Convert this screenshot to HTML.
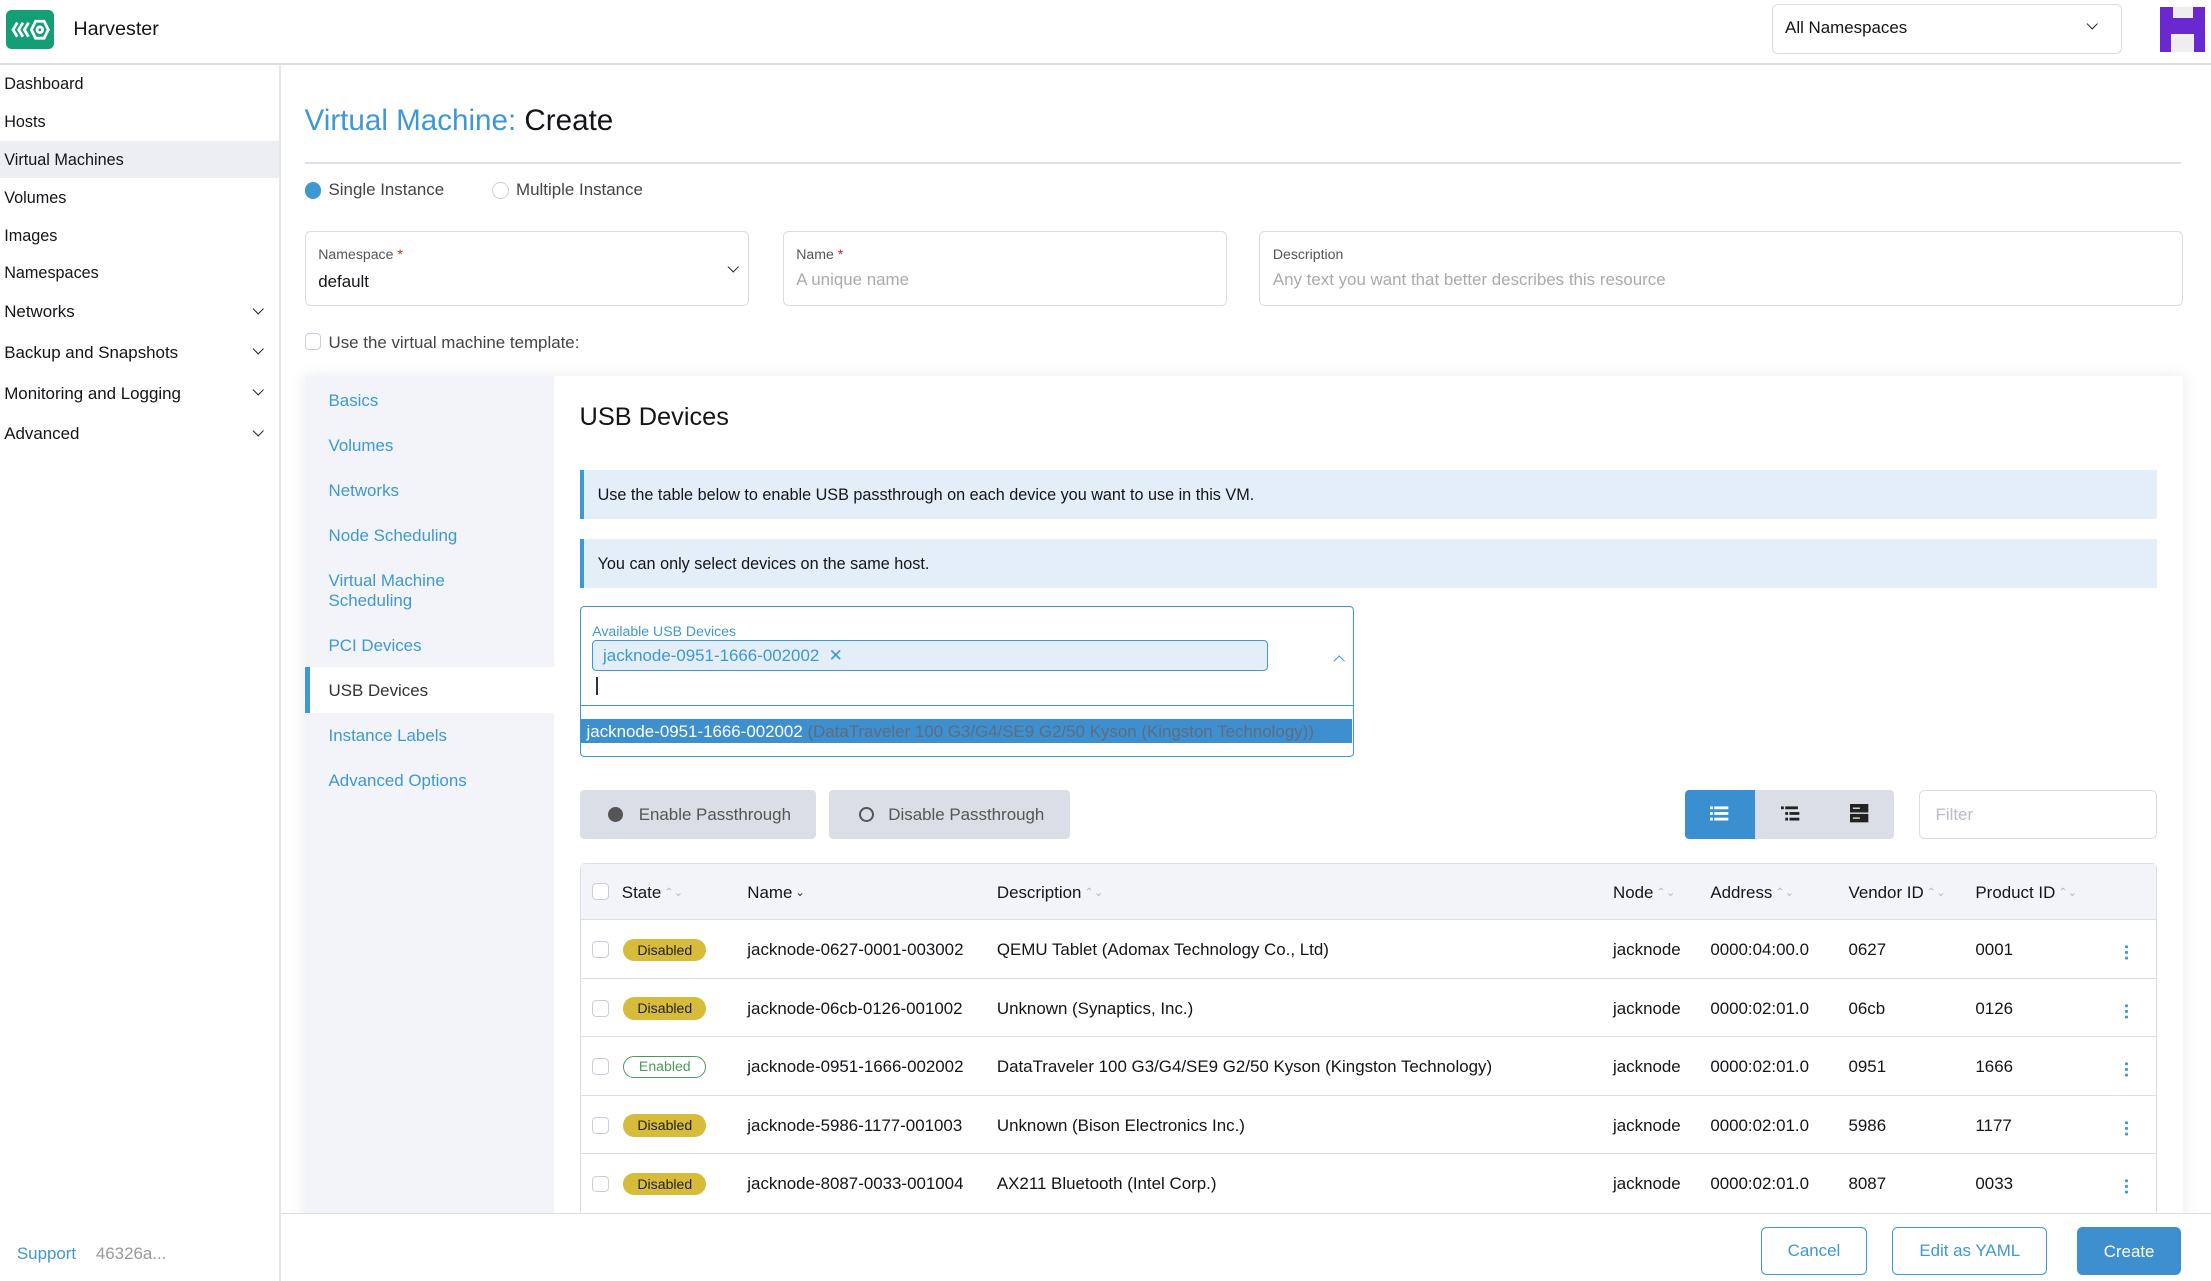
<!DOCTYPE html>
<html><head><meta charset="utf-8"><style>
*{box-sizing:border-box;margin:0;padding:0}
html,body{width:2211px;height:1281px;overflow:hidden;background:#fff}
#r{zoom:1.41;width:1568px;height:909px;position:relative;font-family:"Liberation Sans",sans-serif;color:#141419;font-size:12px}
.a{position:absolute;white-space:nowrap}
.blue{color:#3d98d3}
.sb{position:absolute;left:3px;font-size:11.5px;margin-top:1px}
.chev{position:absolute;left:180px;width:6px;height:6px;border-right:1.3px solid #222;border-bottom:1.3px solid #222;transform:rotate(45deg)}
.inp{position:absolute;border:1px solid #dcdee7;border-radius:4px;background:#fff}
.lbl{position:absolute;left:9px;top:10px;font-size:10px;color:#555}
.tab{position:absolute;left:17px;font-size:12px;color:#3d98d3;margin-top:1px}
.banner{position:absolute;left:411px;width:1119px;height:35px;background:#e3eef8;border-left:3px solid #3d98d3;padding-left:10px;line-height:36px;font-size:11.5px}
.th{position:absolute;top:626px;font-size:12px}
.sort{display:inline-block;font-size:8px;color:#bbb;margin-left:2px;vertical-align:1px}
.row{position:absolute;left:411px;width:1119px;height:41.5px;border-top:1px solid #dcdee7}
.row span{position:absolute;top:14px;font-size:12px;white-space:nowrap}
.cb{position:absolute;width:12px;height:12px;border:1px solid #ccd;border-radius:3px;background:#fff}
.bd{position:absolute;left:31px;top:12px;height:16px;width:59px;border-radius:8px;background:#d7bb3a;font-size:10px;text-align:center;line-height:16px;color:#222}
.dots{position:absolute;left:1096px;top:17px;width:2px;height:12px;background:radial-gradient(circle,#3d98d3 1px,transparent 1.2px) 0 0/2px 4px}
.btn{position:absolute;top:870px;height:34px;border-radius:4px;font-size:12px;text-align:center;line-height:33px}
</style></head><body><div id="r">
<div class="a" style="left:4px;top:7px;width:34px;height:28px;background:#139e76;border-radius:4px"><svg width="34" height="28" viewBox="0 0 34 28"><g fill="none" stroke="#fff" stroke-width="2"><path d="M8 9l-3 5 3 5M12 9l-3 5 3 5M16 9l-3 5 3 5"/><path d="M21 8h6l3 6-3 6h-6l-3-6z"/><circle cx="24" cy="14" r="2"/></g></svg></div>
<div class="a" style="left:52px;top:13px;font-size:14px">Harvester</div>
<div class="a" style="left:1257px;top:3px;width:248px;height:35px;border:1px solid #dcdee7;border-radius:4px"></div>
<div class="a" style="left:1266px;top:13px;font-size:12px">All Namespaces</div>
<div class="a" style="left:1481px;top:14px;width:6px;height:6px;border-right:1.3px solid #222;border-bottom:1.3px solid #222;transform:rotate(45deg)"></div>
<div class="a" style="left:1532px;top:5px;width:32px;height:32px;background:#eee"></div>
<div class="a" style="left:1532px;top:5px;width:32px;height:19px;background:#6a28d0"></div>
<div class="a" style="left:1541px;top:5px;width:14px;height:8px;background:#eee"></div>
<div class="a" style="left:1532px;top:24px;width:8px;height:13px;background:#6a28d0"></div>
<div class="a" style="left:1556px;top:24px;width:8px;height:13px;background:#6a28d0"></div>
<div class="a" style="left:0;top:45px;width:1568px;height:1px;background:#dcdee7"></div>
<div class="a" style="left:198px;top:46px;width:1px;height:863px;background:#e6e7ee"></div>
<div class="a" style="left:0;top:100px;width:198px;height:26px;background:#eceef3"></div>
<div class="sb" style="top:52px">Dashboard</div>
<div class="sb" style="top:79px">Hosts</div>
<div class="sb" style="top:106px">Virtual Machines</div>
<div class="sb" style="top:133px">Volumes</div>
<div class="sb" style="top:160px">Images</div>
<div class="sb" style="top:186px">Namespaces</div>
<div class="sb" style="top:213px;font-size:12px">Networks</div><div class="chev" style="top:216px"></div>
<div class="sb" style="top:242px;font-size:12px">Backup and Snapshots</div><div class="chev" style="top:245px"></div>
<div class="sb" style="top:271px;font-size:12px">Monitoring and Logging</div><div class="chev" style="top:274px"></div>
<div class="sb" style="top:300px;font-size:12px">Advanced</div><div class="chev" style="top:303px"></div>
<div class="a blue" style="left:12px;top:882px;font-size:12px">Support</div>
<div class="a" style="left:68px;top:882px;font-size:12px;color:#999">46326a...</div>
<div class="a" style="left:216px;top:74px;font-size:21px"><span class="blue">Virtual Machine:</span> Create</div>
<div class="a" style="left:216px;top:115px;width:1331px;height:1px;background:#dcdee7"></div>
<div class="a" style="left:216px;top:129px;width:12px;height:12px;border-radius:50%;background:#3d98d3"></div>
<div class="a" style="left:233px;top:128px;color:#444">Single Instance</div>
<div class="a" style="left:349px;top:129px;width:12px;height:12px;border-radius:50%;border:1px solid #ccd"></div>
<div class="a" style="left:366px;top:128px;color:#444">Multiple Instance</div>
<div class="inp" style="left:216px;top:164px;width:315px;height:53px"><div class="lbl">Namespace<span style="color:#d22"> *</span></div><div class="a" style="left:9px;top:28px;font-size:12px">default</div><div class="a" style="left:300px;top:22px;width:6px;height:6px;border-right:1.3px solid #222;border-bottom:1.3px solid #222;transform:rotate(45deg)"></div></div>
<div class="inp" style="left:555px;top:164px;width:315px;height:53px"><div class="lbl">Name<span style="color:#d22"> *</span></div><div class="a" style="left:9px;top:27px;color:#aaa">A unique name</div></div>
<div class="inp" style="left:893px;top:164px;width:655px;height:53px"><div class="lbl">Description</div><div class="a" style="left:9px;top:27px;color:#aaa">Any text you want that better describes this resource</div></div>
<div class="a" style="left:216px;top:236px;width:12px;height:12px;border:1px solid #ccd;border-radius:3px"></div>
<div class="a" style="left:233px;top:236px;color:#444">Use the virtual machine template:</div>
<div class="a" style="left:216px;top:267px;width:1332px;height:600px;background:#fff;box-shadow:0 0 12px rgba(0,0,0,.08)"></div>
<div class="a" style="left:216px;top:267px;width:177px;height:600px;background:#f3f4f9"></div>
<div class="a" style="left:216px;top:473px;width:177px;height:33px;background:#fff;border-left:4px solid #3d98d3"></div>
<div class="a" style="left:216px;top:267px;width:177px">
<div class="tab" style="top:9px">Basics</div>
<div class="tab" style="top:41px">Volumes</div>
<div class="tab" style="top:73px">Networks</div>
<div class="tab" style="top:105px">Node Scheduling</div>
<div class="tab" style="top:137px;line-height:14px">Virtual Machine<br>Scheduling</div>
<div class="tab" style="top:183px">PCI Devices</div>
<div class="tab" style="top:215px;color:#333">USB Devices</div>
<div class="tab" style="top:247px">Instance Labels</div>
<div class="tab" style="top:279px">Advanced Options</div>
</div>
<div class="a" style="left:411px;top:286px;font-size:18px">USB Devices</div>
<div class="banner" style="top:333px">Use the table below to enable USB passthrough on each device you want to use in this VM.</div>
<div class="banner" style="top:382px">You can only select devices on the same host.</div>
<div class="a" style="left:411px;top:430px;width:549px;height:107px;border:1px solid #3d98d3;border-radius:3px;background:#fff"></div>
<div class="a blue" style="left:420px;top:442px;font-size:10px">Available USB Devices</div>
<div class="a" style="left:420px;top:454px;width:479px;height:22px;background:#e3eef8;border:1px solid #3d98d3;border-radius:3px;color:#3d98d3;padding-left:7px;line-height:21px;font-size:12px">jacknode-0951-1666-002002 &nbsp;✕</div>
<div class="a" style="left:947px;top:466px;width:6px;height:6px;border-left:1.3px solid #3d98d3;border-top:1.3px solid #3d98d3;transform:rotate(45deg)"></div>
<div class="a" style="left:423px;top:480px;width:1px;height:13px;background:#333"></div>
<div class="a" style="left:411px;top:500px;width:549px;height:1px;background:#3d98d3"></div>
<div class="a" style="left:412px;top:510px;width:547px;height:17px;background:#3d8fd0;line-height:18px;padding-left:4px;font-size:12px;color:#fff">jacknode-0951-1666-002002 <span style="color:#5d6d80">(DataTraveler 100 G3/G4/SE9 G2/50 Kyson (Kingston Technology))</span></div>
<div class="a" style="left:411px;top:560px;width:168px;height:35px;background:#dcdee7;border-radius:3px;line-height:36px;color:#555;padding-left:42px">Enable Passthrough</div>
<div class="a" style="left:431px;top:572px;width:11px;height:11px;border-radius:50%;background:#555"></div>
<div class="a" style="left:588px;top:560px;width:171px;height:35px;background:#dcdee7;border-radius:3px;line-height:36px;color:#555;padding-left:42px">Disable Passthrough</div>
<div class="a" style="left:609px;top:572px;width:11px;height:11px;border-radius:50%;border:1.5px solid #555"></div>
<div class="a" style="left:1195px;top:560px;width:148px;height:35px;background:#dcdee7;border-radius:3px"></div>
<div class="a" style="left:1195px;top:560px;width:50px;height:35px;background:#3a8fd0;border-radius:3px 0 0 3px"></div>
<svg class="a" style="left:1213px;top:571px" width="14" height="12"><g fill="#fff"><rect x="0" y="1" width="2" height="2"/><rect x="3" y="1" width="10" height="2"/><rect x="0" y="5" width="2" height="2"/><rect x="3" y="5" width="10" height="2"/><rect x="0" y="9" width="2" height="2"/><rect x="3" y="9" width="10" height="2"/></g></svg>
<svg class="a" style="left:1263px;top:571px" width="14" height="12"><g fill="#222"><rect x="0" y="1" width="2" height="2"/><rect x="3" y="1" width="9" height="2"/><rect x="3" y="5" width="2" height="2"/><rect x="6" y="5" width="7" height="2"/><rect x="3" y="9" width="2" height="2"/><rect x="6" y="9" width="7" height="2"/></g></svg>
<svg class="a" style="left:1312px;top:570px" width="14" height="14"><rect x="0" y="0" width="13" height="6" fill="#222"/><rect x="0" y="7" width="13" height="6" fill="#222"/><rect x="2" y="2.5" width="5" height="1" fill="#ddd"/><rect x="2" y="9.5" width="5" height="1" fill="#ddd"/></svg>
<div class="inp" style="left:1361px;top:560px;width:169px;height:35px;color:#bbc;padding-left:11px;line-height:34px">Filter</div>
<div class="a" style="left:411px;top:612px;width:1119px;height:260px;border:1px solid #dcdee7;border-radius:4px"></div>
<div class="a" style="left:412px;top:613px;width:1117px;height:39px;background:#f3f4f9"></div>
<div class="cb" style="left:420px;top:626px"></div>
<div class="th" style="left:441px">State<span class="sort">⌃⌄</span></div>
<div class="th" style="left:530px">Name<span class="sort" style="color:#333">⌄</span></div>
<div class="th" style="left:707px">Description<span class="sort">⌃⌄</span></div>
<div class="th" style="left:1144px">Node<span class="sort">⌃⌄</span></div>
<div class="th" style="left:1213px">Address<span class="sort">⌃⌄</span></div>
<div class="th" style="left:1311px">Vendor ID<span class="sort">⌃⌄</span></div>
<div class="th" style="left:1401px">Product ID<span class="sort">⌃⌄</span></div>
<div class="row" style="top:652px"><div class="cb" style="left:9px;top:15px"></div><div class="bd" style="top:13px">Disabled</div><span style="left:119px">jacknode-0627-0001-003002</span><span style="left:296px">QEMU Tablet (Adomax Technology Co., Ltd)</span><span style="left:733px">jacknode</span><span style="left:802px">0000:04:00.0</span><span style="left:900px">0627</span><span style="left:990px">0001</span><div class="dots"></div></div>
<div class="row" style="top:693.5px"><div class="cb" style="left:9px;top:15px"></div><div class="bd" style="top:13px">Disabled</div><span style="left:119px">jacknode-06cb-0126-001002</span><span style="left:296px">Unknown (Synaptics, Inc.)</span><span style="left:733px">jacknode</span><span style="left:802px">0000:02:01.0</span><span style="left:900px">06cb</span><span style="left:990px">0126</span><div class="dots"></div></div>
<div class="row" style="top:735px"><div class="cb" style="left:9px;top:15px"></div><div class="bd" style="top:13px;background:#fff;border:1px solid #4b9a5c;color:#4b9a5c;line-height:14px">Enabled</div><span style="left:119px">jacknode-0951-1666-002002</span><span style="left:296px">DataTraveler 100 G3/G4/SE9 G2/50 Kyson (Kingston Technology)</span><span style="left:733px">jacknode</span><span style="left:802px">0000:02:01.0</span><span style="left:900px">0951</span><span style="left:990px">1666</span><div class="dots"></div></div>
<div class="row" style="top:776.5px"><div class="cb" style="left:9px;top:15px"></div><div class="bd" style="top:13px">Disabled</div><span style="left:119px">jacknode-5986-1177-001003</span><span style="left:296px">Unknown (Bison Electronics Inc.)</span><span style="left:733px">jacknode</span><span style="left:802px">0000:02:01.0</span><span style="left:900px">5986</span><span style="left:990px">1177</span><div class="dots"></div></div>
<div class="row" style="top:818px"><div class="cb" style="left:9px;top:15px"></div><div class="bd" style="top:13px">Disabled</div><span style="left:119px">jacknode-8087-0033-001004</span><span style="left:296px">AX211 Bluetooth (Intel Corp.)</span><span style="left:733px">jacknode</span><span style="left:802px">0000:02:01.0</span><span style="left:900px">8087</span><span style="left:990px">0033</span><div class="dots"></div></div>
<div class="a" style="left:199px;top:860px;width:1369px;height:49px;background:#fff;border-top:1px solid #dcdee7"></div>
<div class="btn" style="left:1249px;width:75px;border:1px solid #3d98d3;color:#3d98d3">Cancel</div>
<div class="btn" style="left:1342px;width:110px;border:1px solid #3d98d3;color:#3d98d3">Edit as YAML</div>
<div class="btn" style="left:1473px;width:74px;background:#3d8fd0;color:#fff;line-height:35px">Create</div>
</div></body></html>
